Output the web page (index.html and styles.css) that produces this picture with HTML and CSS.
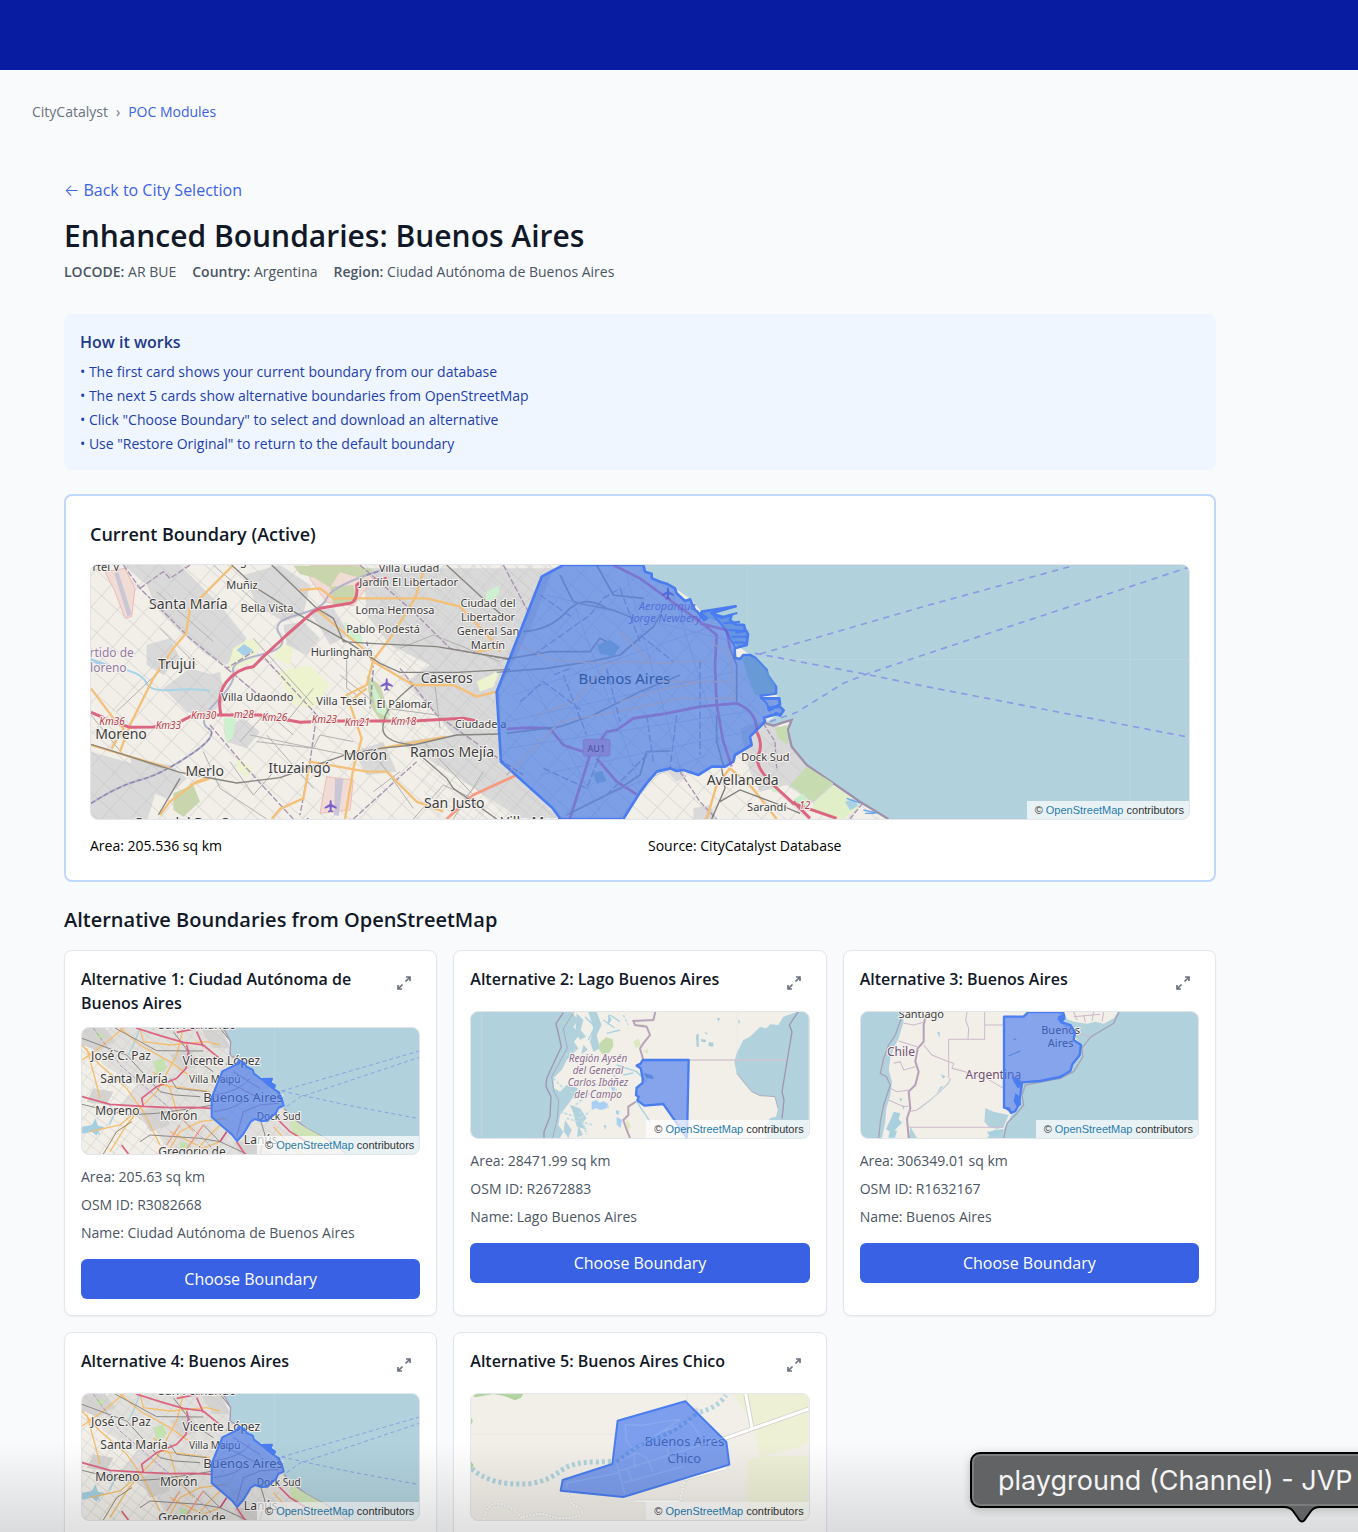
FILE: index.html
```html
<!DOCTYPE html>
<html lang="en">
<head>
<meta charset="utf-8">
<meta name="viewport" content="width=device-width, initial-scale=1">
<title>Enhanced Boundaries: Buenos Aires</title>
<link rel="stylesheet" href="styles.css">
</head>
<body>
<svg class="defs" width="0" height="0" aria-hidden="true">
  <defs>
    <pattern id="streets" width="64" height="46" patternUnits="userSpaceOnUse" patternTransform="rotate(42)">
      <path d="M0 1H64M1 0V46" stroke="#c3c1c0" stroke-width="2" fill="none"/>
    </pattern>
    <pattern id="streets-fine" width="34" height="26" patternUnits="userSpaceOnUse" patternTransform="rotate(38)">
      <path d="M0 1H34M1 0V26" stroke="#cbc9c8" stroke-width="2" fill="none"/>
    </pattern>
    <g id="plane"><path d="M0-18q3 0 3 6v6l15 9v5l-15-5v9l5 4v3l-8-2-8 2v-3l5-4v-9l-15 5v-5l15-9v-6q0-6 3-6z" fill="#7a5fc7"/></g>
    <g id="expand">
      <path d="M11.500 8.500 16 4M12 4H16V8M8.500 11.500 4 16M4 12V16H8" fill="none" stroke="currentColor" stroke-width="1.700"/>
    </g>

    <g id="metro-base">
      <path d="M66 249H1078V627H66z" fill="#f2efe9"/>
      <path d="M150 249H490L520 340 600 400 670 480 740 540 860 627H330L290 560 180 480 230 420 130 360 90 290z" fill="#e2e0dd"/>
      <path d="M66 249h70l30 40-50 30-50-20zM330 330l60-20 30 50-60 20zM100 430l60 10-20 40-60-10zM240 500l70-20 20 60-60 20zM420 249l60 0 30 60-50 0zM520 590l60 0 60 37h-100z" fill="#d4d3d1"/>
      <path d="M66 249H600L860 627H66z" fill="url(#streets-fine)" opacity=".8"/>
      <path d="M280 350l30-10 10 30-30 20zM110 262l20 5 0 16-18-4zM300 395l20 5-8 20-18-4zM360 590l30 6-6 20-26-6zM690 560l40-20 50 30-20 30z" fill="#c4e2b0"/>
      <path d="M66 545l30-5 10-20 8 22 20 4-18 12-6 14-14-12-30 6z" fill="#a5cfe0"/>
      <path d="M150 480l12 30-14 30M205 330l15-30 20-50M100 540l20 30" fill="none" stroke="#a5cfe0" stroke-width="4"/>
      <g fill="none" stroke="#f3bd6c" stroke-width="4">
        <path d="M66 300 120 360 200 430 250 500 300 600M66 345 130 300 190 249M80 310 105 400 120 460M150 620 200 540 240 490 290 440 350 330 370 249M180 249 240 300 330 350 400 400M240 249 250 290 330 300 440 290 480 300M90 560 180 540 240 490M300 420 380 430 450 440M320 627 360 560 420 530 500 520M400 627 440 580 480 540M640 545 690 600 730 627M280 380 330 430 350 500 400 560M330 560 430 610 480 590"/>
      </g>
      <g fill="none" stroke="#8b8885" stroke-width="3">
        <path d="M66 280 200 330 300 440 345 450 420 455M66 478 200 510 290 505 400 490 460 480M165 249 290 317 430 318M340 260 400 340 460 380M430 540 480 590 560 627M240 590 270 570 420 580 480 590M600 520 615 570 600 627M480 249 520 300 500 360M330 400 350 430 440 440"/>
        <path d="M130 627 170 560 215 530" stroke="#9c8561"/>
      </g>
      <g fill="none" stroke="#dd6480" stroke-width="5">
        <path d="M66 455 150 478 250 484 330 488 400 487 455 490M250 484 245 460 290 425 350 400 378 370 385 320 380 300M228 249 300 272 370 292 430 300 490 350M410 260 430 305M350 262 420 249M530 590 555 627M655 525 690 560 740 590M185 600 205 627"/>
        <path d="M500 560 480 590" stroke="#c9557a"/>
        <path d="M360 540 320 600M430 540 370 627" stroke="#f0997f" stroke-width="4"/>
      </g>
      <path d="M100 249 180 360 330 490 440 590 470 627" fill="none" stroke="#b19ab7" stroke-width="3" stroke-dasharray="12 5"/>
      <path d="M490 249 512 290 510 330 540 350 600 395 640 410 648 440 668 470 672 490 700 520 740 550 800 582 860 627H1078V249z" fill="#b1d2dd"/>
      <path d="M490 249 512 290 510 330 540 350M672 490 700 520 740 550 800 582 860 627" fill="none" stroke="#a99ab3" stroke-width="4"/>
      <path d="M690 520l50 30 55 30-25 30-80-60z" fill="#cfe3b6"/>
      <path d="M643 249V430" stroke="#bfd8e0" stroke-width="2"/>
      <g fill="none" stroke="#8aa0e4" stroke-width="3" stroke-dasharray="12 9">
        <path d="M665 438 1078 318M665 438 860 480 1078 521M680 485 720 456 800 430 1078 337"/>
      </g>
    </g>
    <g id="metro-boundary">
      <path d="M455 458 487 379 530 358 537 346 553 354 560 366 578 374 582 386 604 402 636 401 632 412 645 422 641 432 657 442 661 455 665 458 671 482 655 489 647 506 638 512 622 527 603 528 585 522 572 530 550 567 531 588 518 571 455 516z" fill="#3e72ee" fill-opacity=".62" stroke="#4a7df0" stroke-width="6" stroke-linejoin="round"/>
      <path d="M600 402 636 401 630 412 645 424 640 434 628 426z" fill="#4a7df0"/>
      <path d="M462 450Q540 440 570 400M462 500Q540 490 560 455M530 575 550 500 600 480 655 475M480 400 600 460M520 380 600 430" fill="none" stroke="#5a69c8" stroke-width="3" opacity=".55"/>
    </g>
  </defs>
</svg>

<div class="app">
  <header class="topbar"></header>
  <nav class="breadcrumb" aria-label="Breadcrumb">
    <span>CityCatalyst</span><span>›</span><a href="#modules">POC Modules</a>
  </nav>

  <main class="content">
    <a class="back" href="#cities"><span class="arrow">←</span> Back to City Selection</a>
    <h1>Enhanced Boundaries: Buenos Aires</h1>
    <div class="meta">
      <span><b>LOCODE:</b> AR BUE</span>
      <span><b>Country:</b> Argentina</span>
      <span><b>Region:</b> Ciudad Autónoma de Buenos Aires</span>
    </div>

    <section class="info">
      <h2>How it works</h2>
      <ul>
        <li>• The first card shows your current boundary from our database</li>
        <li>• The next 5 cards show alternative boundaries from OpenStreetMap</li>
        <li>• Click "Choose Boundary" to select and download an alternative</li>
        <li>• Use "Restore Original" to return to the default boundary</li>
      </ul>
    </section>

    <section class="current">
      <h2>Current Boundary (Active)</h2>
      <div class="map map-large">
        <svg viewBox="33 30 3294 762" preserveAspectRatio="xMidYMid slice">
          <path d="M33 30H3327V792H33z" fill="#f2efe9"/>
          <!-- built-up areas -->
          <g fill="#d9d9d9">
            <path d="M130 30H300L420 150 500 250 440 330 380 300 300 230 230 160 200 90zM200 270l70-20 30 60-50 50-50-30zM33 590l140 40 60 60-30 102H33zM150 610l120 20 50 40-60 60-80-30zM250 400l80-60 70 20 40 70-60 60-60-20zM360 370l60-20 10 60-40 30zM430 520l60-30 50 40-40 50-60-20zM490 60l110-30 90 60-20 90-60 20-80-50zM610 210l60-10 50 50-40 50-60-30zM690 170l70-10 50 80-60 30zM820 590l90-30 40 90-90 10z"/>
            <path d="M850 40H1420L1360 200 1260 400 1262 620 1440 790H1320L1120 660 960 560 1120 540 1060 470 980 380 1050 330 930 270 860 180z"/>
            <path d="M1980 520l60-20 80 20 30 70 60 60 60 30-60 70-90-60-80 20-30-60zM1760 650l40-15 20 30-30 15zM1840 760l50-10 20 42h-70z"/>
          </g>
          <path d="M33 30H1700L2400 792H33z" fill="url(#streets)" opacity=".75"/>
          <path d="M880 30H1420L1262 400V620L1440 792H1050z" fill="url(#streets-fine)" opacity=".7"/>
          <!-- parks, airfields and farmland -->
          <path d="M75 50l60-10 30 60-10 85-20 5-30-80zM690 32h150l40 40-60 80-80-10-50-70zM740 665l80 10-10 90-90 10z" fill="#f0dbd5" stroke="#e9a9a2" stroke-width="2"/>
          <path d="M103 55l12-3 40 125-12 8zM765 670l25 3-14 110-14-3z" fill="#c9c6d6"/>
          <path d="M640 32h180l60 10-30 30-70-20-30 45-50-30-40-10zM750 95l70-5 10 50-70 10zM280 715l60-25 20 50-50 45-30-20zM860 360l40 30 30 90-20 30-40-60z" fill="#c9d5ac"/>
          <path d="M460 280l50-30 30 20-20 50-80 30zM600 260l40 20-10 50-50-20zM590 350l100-20 60 60-50 70-60-10zM470 610l50 30-20 30-30-30zM1190 380l70-35-20 50-40 15z" fill="#edf2cf"/>
          <path d="M790 200l50 20 10 50-50-20zM430 490l40-5-10 60-20 20zM870 370l30 60 30 60-40-20zM1220 110l40-20-5 30-40 30z" fill="#cdf0cf"/>
          <path d="M470 285l22-18 12 8 14 10-16 18-14-2zM33 310l60 20-20 6-40-16z" fill="#a4cfe6"/>
          <path d="M140 345Q190 360 200 385T280 405T390 408" fill="none" stroke="#a8d4e6" stroke-width="6"/>
          <path d="M33 745Q120 690 180 675T330 600 385 520 410 440 460 350 540 300 600 240 650 180 740 130 860 60 930 40" fill="none" stroke="#b3b4cb" stroke-width="6"/>
          <path d="M33 745Q120 690 180 675T330 600 385 520M860 60 930 40M860 260 880 340 870 460" fill="none" stroke="#8a84ab" stroke-width="4" stroke-dasharray="14 8"/>
          <!-- district borders -->
          <g fill="none" stroke="#a892b2" stroke-width="4" stroke-dasharray="18 6">
            <path d="M130 30 180 100 330 250 440 340 520 290M440 340 560 440M555 310 710 480 690 620 660 780M180 100 250 50 270 70 330 30M555 310 590 350M390 510 500 640 640 792M840 30 1000 170 1110 280 1290 315M960 340 1070 480 1240 600 1330 660M1270 30 1350 180M820 792 1010 620"/>
          </g>
          <!-- secondary roads -->
          <g fill="none" stroke="#b3b1af" stroke-width="3">
            <path d="M33 480 130 600 250 640M230 110 400 260M370 590 420 700 560 792M450 620 520 720 590 640M510 540 800 600M530 560 700 580 720 540 820 560M800 300V400L830 420M400 30 560 170M240 220 350 330M110 470 290 300M520 250 700 450M560 540 700 700M480 560 560 470 640 540M780 360 880 440M700 400 620 500"/>
            <path d="M1030 560 1180 720M900 620 1000 760M880 710 960 650M1000 792 1090 690 1200 740M1120 792 1210 650M960 280 1060 240 1260 320M1060 350 1080 520M920 460 1070 480"/>
          </g>
          <!-- main avenues -->
          <g fill="none" stroke="#f4c078" stroke-width="7">
            <path d="M460 30 330 160 318 235 280 280 220 370 150 510 120 590M33 400 100 490 130 520 95 580M660 105 720 100 760 130H870L1040 130 1140 155 1240 260 1260 290M1030 50 1005 130 930 250 880 315 860 390 800 420 845 550 820 640 795 792M705 160 860 290 880 320 1000 390 1120 390 1190 425 1250 410M240 780 270 740 350 680 380 670M690 620 860 650H920L1010 740 1090 770M575 792 600 762 670 730 690 620M33 570 270 640M900 580 1100 545M330 690l60-20M1240 280l-50 10M860 400 810 440"/>
          </g>
          <path d="M1100 792 1180 720 1310 660" fill="none" stroke="#f79a7f" stroke-width="8"/>
          <!-- railways -->
          <g fill="none" stroke="#86847f" stroke-width="4">
            <path d="M33 568 300 652 470 684 600 668 800 598 900 580 1000 570 1130 540 1260 537M455 30 530 100 650 175 810 265 900 325 960 352 1130 352 1290 343M575 30 710 160 760 190 790 260 870 265 1070 275 1290 312M1000 570Q890 560 912 500 912 460 1000 390M1020 600 1100 670 1120 700 1250 792M1100 30 1230 150 1290 200M235 780 300 670"/>
          </g>
          <!-- motorway -->
          <g fill="none" stroke="#dc6680" stroke-width="9" stroke-linejoin="round">
            <path d="M33 472 100 500 150 517 220 516 290 505 340 480H540L660 502 760 498 1000 498 1150 490 1190 498M424 484Q408 420 440 380T520 335L550 305 620 240 700 170 720 160 810 145Q835 138 830 90L840 82 920 70"/>
          </g>

          <!-- waterfront and river -->
          <g transform="translate(1680 0)">
            <path d="M10 30 15 50 35 55 35 70 105 100 155 135 200 190 240 200 290 270 330 300 375 345 408 415 430 470 380 500 400 512 430 502 455 495 443 525 455 575 500 630 580 685 660 740 745 792H1648V30z" fill="#b1d2dd"/>
            <path d="M370 502 400 512 430 502 455 495 443 525 455 575 500 630 580 685 660 740 745 792" fill="none" stroke="#9d91ab" stroke-width="7"/>
            <path d="M450 690l50-55 80 50-60 55zM405 520l35-10 5 60-30-20z" fill="#c6dbaf"/>
            <path d="M520 745l60-55 80 60-50 42-90-20z" fill="#e0efc7"/>
            <path d="M615 740l25-8 15 20-25 14z" fill="#a9d2e4"/>
            <path d="M670 765l45 10M620 730l40 14M675 775h30" fill="none" stroke="#6ba7e8" stroke-width="4"/>
            <path d="M460 735l30-20 15 30-20 25zM400 680l20 4-10 30-14-6z" fill="#c6efca"/>
            <path d="M370 505 405 560 410 640M120 650 180 740 230 792M630 792l40-50" fill="none" stroke="#a892b2" stroke-width="4" stroke-dasharray="16 6"/>
            <path d="M270 640 230 690 200 792M270 640 330 690 410 792" fill="none" stroke="#f4bd72" stroke-width="7"/>
            <path d="M245 640 255 700 215 792M240 740 300 705 420 750 480 775" fill="none" stroke="#7f7d7a" stroke-width="4"/>
            <path d="M350 530Q370 570 355 600T400 690L460 745 590 790M460 740 510 790" fill="none" stroke="#dc6680" stroke-width="9"/>
            <path d="M323 30V240M330 313H1648M1470 30V792" stroke="#bfd8e0" stroke-width="2"/>
            <g fill="none" stroke="#8d98e6" stroke-width="5" stroke-dasharray="19 16">
              <path d="M360 297 860 152 1300 32M345 295 680 358 860 395 1648 547M390 500 470 472 610 385 680 357 880 290 1648 36"/>
            </g>
          </g>

          <g class="label town">
            <text x="325" y="163">Santa María</text><text x="290" y="342">Trujui</text><text x="123" y="553">Moreno</text>
            <text x="374" y="664">Merlo</text><text x="658" y="655">Ituzaingó</text><text x="856" y="616">Morón</text>
            <text x="1100" y="384">Caseros</text><text x="1116" y="605">Ramos Mejía</text><text x="1123" y="759">San Justo</text>
            <text x="1988" y="689">Avellaneda</text><text x="328" y="818">Paso del Rey Sur</text><text x="1385" y="816">Villa Madero</text>
          </g>
          <g class="label suburb">
            <text x="486" y="101">Muñiz</text><text x="561" y="171">Bella Vista</text><text x="78" y="48">rtel V</text>
            <text x="785" y="304">Hurlingham</text><text x="532" y="439">Villa Udaondo</text><text x="784" y="450">Villa Tesei</text>
            <text x="987" y="50">Villa Ciudad</text><text x="986" y="93">Jardín El Libertador</text><text x="945" y="177">Loma Hermosa</text>
            <text x="909" y="233">Pablo Podestá</text><text x="972" y="459">El Palomar</text><text x="1202" y="519">Ciudadela</text>
            <text x="1224" y="156">Ciudad del</text><text x="1224" y="198">Libertador</text><text x="1224" y="241">General San</text><text x="1224" y="283">Martín</text>
            <text x="2056" y="617">Dock Sud</text><text x="2060" y="769">Sarandí</text><text x="480" y="30">ng</text>
          </g>
          <g class="label partido"><text x="95" y="305">rtido de</text><text x="85" y="350">loreno</text></g>
          <g class="label km">
            <text x="96" y="509">Km36</text><text x="265" y="521">Km33</text><text x="371" y="491">Km30</text><text x="492" y="489">m28</text>
            <text x="584" y="498">Km26</text><text x="733" y="505">Km23</text><text x="832" y="512">Km21</text><text x="971" y="510">Km18</text><text x="2174" y="762">12</text>
          </g>
          <g class="label airport"><text x="752" y="812">Aeropuerto</text><text x="1762" y="165">Aeroparque</text><text x="1757" y="200">Jorge Newbery</text></g>
          <use href="#plane" x="752" y="753"/><use href="#plane" x="920" y="388"/><use href="#plane" x="1764" y="115"/>
          <g class="label city"><text x="1633" y="388">Buenos Aires</text></g>

          <!-- active boundary -->
          <g transform="translate(1680 0)">
            <path d="M-230 30-295 65-430 410-417 620-262 760-238 792H-50L0 712 20 685 50 650 90 640 110 648 130 645 175 660 215 635 255 635 280 620 285 600 335 570 330 545 355 520 375 500 372 488 392 482 400 480 410 474 420 482 431 466 420 455 385 458 388 466 420 448 418 430 365 430 362 422 408 415 408 395 383 360 380 345 345 308 330 300 310 300 300 312 285 308 284 280 320 270 324 238 318 226 290 232 316 226 312 210 285 208 270 195 275 180 245 188 215 175 287 154 185 170 183 175 200 190 192 195 172 170 165 165 150 133 135 138 110 115 105 100 80 86 60 80 35 70 35 56 15 50 10 30z" fill="#3c72e4" fill-opacity=".64" stroke="#4a7df0" stroke-width="8" stroke-linejoin="round"/>
            <path d="M215 175 250 185 292 174M250 205 300 200M265 225 318 228M275 245 322 245M280 262 322 264M220 180 250 215 285 275" fill="none" stroke="#4a7df0" stroke-width="6"/>
            <path d="M305 305 345 308 380 345 405 390V415L345 420 325 370z" fill="#6498d4" opacity=".8"/>
            <path d="M365 430H415L420 448 388 462 380 445zM390 482 425 478" fill="none" stroke="#4a7df0" stroke-width="6"/>
            <g opacity=".5">
              <path d="M-400 522-330 518-270 520-230 570-170 590M-210 790-150 600-100 530-70 525-20 490 80 475 180 455 230 450 290 445Q350 470 350 525M-130 610-70 680-10 718M-80 30 0 70 110 150 180 200 230 240 225 330 230 450 250 560 275 635M180 205 260 225 270 280" fill="none" stroke="#7a4fb8" stroke-width="8"/>
              <path d="M-430 352-280 340-140 318-60 300 40 215 60 180M-400 535-240 515-140 480 0 410 120 360M-240 60-200 140-160 150-80 165-20 190M-220 780-60 700 0 660 20 590 90 588M-130 30-80 120 10 130M-400 312-270 290-150 290-120 250-100 260M230 480V560L250 630M270 280 290 330V440M-350 230Q-270 225-220 170T-100 160" fill="none" stroke="#4d68ac" stroke-width="5"/>
              <path d="M-370 270-260 315-110 325-50 320 60 325 120 320 200 320M-320 485-200 440-100 330M-400 660-240 500-20 460 120 430 280 430M60 380H280M-60 230 30 320M210 260 270 300 280 440M-60 440 80 400 200 380" fill="none" stroke="#9c96b4" stroke-width="5"/>
              <path d="M-320 300-150 180-110 130-60 100M-300 120-200 190M-230 360-160 540M-360 440-290 380-170 470M-290 640-160 700-100 550M180 320V600M20 480 40 620M-60 100 0 260M110 480 90 640M-100 720 20 600M-260 360-210 340M-100 340-60 500M0 240 100 320" fill="none" stroke="#4f6cc6" stroke-width="4" stroke-dasharray="22 8"/>
              <path d="M-380 420 200 220M-400 500 280 350M-400 580 320 470M-300 660 320 530M-350 330-120 770M-200 140 0 690M-40 60 120 640M100 120 250 600M-280 120 280 260M-150 740 200 600" fill="none" stroke="#6384d8" stroke-width="2"/>
              <path d="M-130 270l40-15 30 20-20 30-40-10zM-140 655l25-8 15 30-30 10z" fill="#4a86d0"/>
            </g>
            <rect x="-170" y="553" width="80" height="50" rx="6" fill="#7f86d8" stroke="#7774cc" stroke-width="2"/>
          </g>
          <g class="label route"><text x="1549" y="591">AU1</text></g>
        </svg>
        <div class="credit">© <a href="#osm">OpenStreetMap</a> contributors</div>
      </div>
      <div class="facts"><span>Area: 205.536 sq km</span><span>Source: CityCatalyst Database</span></div>
    </section>

    <h2 class="section-title">Alternative Boundaries from OpenStreetMap</h2>
    <div class="grid">
      <article class="card">
        <div class="card-head">
          <h3>Alternative 1: Ciudad Autónoma de Buenos Aires</h3>
          <button class="icon-button" aria-label="Expand"><svg viewBox="0 0 20 20"><use href="#expand"/></svg></button>
        </div>
        <div class="map">
          <svg viewBox="66 249 1012 378" preserveAspectRatio="xMidYMid slice">
            <use href="#metro-base"/>
            <g class="label place">
              <text x="412" y="253">San Fernando</text><text x="183" y="345">José C. Paz</text><text x="484" y="359">Vicente López</text>
              <text x="222" y="415">Santa María</text><text x="172" y="509">Moreno</text><text x="356" y="526">Morón</text>
              <text x="656" y="526" class="minor">Dock Sud</text><text x="464" y="415" class="minor">Villa Maipú</text><text x="549" y="470" class="major">Buenos Aires</text>
              <text x="602" y="597">Lanús</text><text x="396" y="634">Gregorio de</text>
            </g>
            <use href="#metro-boundary"/>
          </svg>
          <div class="credit">© <a href="#osm">OpenStreetMap</a> contributors</div>
        </div>
        <div class="details"><p>Area: 205.63 sq km</p><p>OSM ID: R3082668</p><p>Name: Ciudad Autónoma de Buenos Aires</p></div>
        <button class="choose">Choose Boundary</button>
      </article>

      <article class="card">
        <div class="card-head">
          <h3>Alternative 2: Lago Buenos Aires</h3>
          <button class="icon-button" aria-label="Expand"><svg viewBox="0 0 20 20"><use href="#expand"/></svg></button>
        </div>
        <div class="map">
          <svg viewBox="63 201 1012 378" preserveAspectRatio="xMidYMid slice">
            <path d="M63 201H1076V579H63z" fill="#f2efe9"/>
            <path d="M63 201H365L385 225 370 245 388 270 372 290 385 310 350 345 335 375 310 400 312 430 330 440 350 420 385 430 360 470 330 510 325 540 340 560 330 579H63z" fill="#b1d2dd"/>
            <path d="M1040 201 1000 215 985 240 960 238 950 250 930 246 900 275 880 285 860 325 853 350 860 385 880 410 905 440 930 452 975 455 984 490 978 515 960 520 940 560 950 579H1076V201z" fill="#b1d2dd"/>
            <path d="M440 201 455 240 440 270 450 310 430 320 420 290 430 250 415 201zM380 205l20 20-8 30 16 20-18 10-14-26zM475 205l10 20-12 15zM400 300l14 14-20 14zM360 480l30 10 20 30-14 14 14 20-30-10-10-40zM345 525l20 30-10 24-14-20zM385 540l14 30-18 6z" fill="#b1d2dd"/>
            <path d="M330 210l18 14-10 14 20 12-6 20-12-20zM480 210l30 20M460 225l34 24M470 265l40-10M405 215l30 30-20 40M500 360l60 20 30 30M520 390l30-6M560 470l40 60" fill="none" stroke="#a9d2e2" stroke-width="4"/>
            <path d="M345 330l40-20M310 400l30 30M360 440l50 14-40 30M370 460l70-20 50 14M330 500l60 20 30-20M350 520l80 20M390 500l20 70M420 420l60-4 20 20M470 370l30 30M520 210l15 30M440 490l40-4" fill="none" stroke="#bddbe2" stroke-width="5" stroke-dasharray="9 5"/>
            <path d="M425 470l14-5 10 8 12-4 14 8-8 14-16 4-12-6-14 6zM498 495l10 3-2 12-8-4zM500 515l16 10-4 24-12-10zM460 540l10 2-4 12zM480 425l16 5-6 10z" fill="#a9d0f2"/>
            <path d="M448 295l20-18 20 6 2 20-12 20-20 5-10-12zM336 228l10 4-2 10z" fill="#c3dbad"/>
            <path d="M550 290l16-10 6 20-14 10zM575 235l14 6-20 6zM580 320l12-10 4 16zM528 520l14 20-10 30z" fill="#dce8bd"/>
            <path d="M738 270l8-4v40h-6zM752 282l16 2v8l-14-2zM776 291l14 2v12l-14-2zM762 262l10 2v6zM800 218l10 2-4 10zM866 222l5 8-6 6z" fill="#a9cfdc"/>
            <path d="M862 201V345M95 201V579" stroke="#dfe2e1" stroke-width="1"/>
            <path d="M716 345H1010" stroke="#d2c6d2" stroke-width="4"/>
            <g fill="none" stroke="#a095b1" stroke-width="4">
              <path d="M340 203 318 235 334 305 290 400 288 425 303 455 300 515 282 560V579M1044 201 1018 240 1026 260 996 440 1002 465 996 520"/>
              <path d="M372 201 340 250 352 310 305 395 312 440 326 465 322 520 308 579M860 385 905 440 930 452 975 455 984 490" stroke-width="2"/>
            </g>
            <path d="M616 201 610 225 550 228 555 240 590 245 600 270 580 295 570 310 580 345M558 470 535 485 535 510 520 525 530 555 540 579" fill="none" stroke="#b8a4b8" stroke-width="6"/>
            <g class="label region"><text x="444" y="352">Región Aysén</text><text x="444" y="388">del General</text><text x="444" y="424">Carlos Ibáñez</text><text x="444" y="459">del Campo</text></g>
            <path d="M578 345H716L711 579 670 520 640 477 583 482 562 466 566 456 558 450 560 428 578 414 578 400 572 370 560 362 572 356z" fill="#3e72ee" fill-opacity=".6" stroke="#4a7df0" stroke-width="7" stroke-linejoin="round"/>
            <path d="M580 384 606 390 612 402 590 400z" fill="#5888df"/>
          </svg>
          <div class="credit">© <a href="#osm">OpenStreetMap</a> contributors</div>
        </div>
        <div class="details"><p>Area: 28471.99 sq km</p><p>OSM ID: R2672883</p><p>Name: Lago Buenos Aires</p></div>
        <button class="choose">Choose Boundary</button>
      </article>

      <article class="card">
        <div class="card-head">
          <h3>Alternative 3: Buenos Aires</h3>
          <button class="icon-button" aria-label="Expand"><svg viewBox="0 0 20 20"><use href="#expand"/></svg></button>
        </div>
        <div class="map">
          <svg viewBox="62 201 1012 378" preserveAspectRatio="xMidYMid slice">
            <path d="M62 201H1074V579H62z" fill="#b1d2dd"/>
            <path d="M186 201 190 230 175 280 160 310 150 340 145 375 155 410 150 450 138 490 135 530 125 579H205L210 545 230 579H440L460 555 490 552 488 579 492 545 510 515 480 507 455 505 440 488 432 530 445 545 490 552 515 508 535 490 545 450 545 410 620 402 680 385 720 330 722 300 700 270 660 222 655 201z" fill="#f2efe9"/>
            <path d="M670 201H832L820 220 790 236 765 230 740 236 700 230 680 222z" fill="#f2efe9"/>
            <path d="M432 530 435 490 460 500 505 510 490 545 470 552 445 545z" fill="#b1d2dd"/>
            <path d="M160 500l20 5-5 18 10 10-30 30-18-10 14-30zM185 480l8 4-4 12zM150 550l20 8-6 20h-20zM176 459l10 2-4 10zM290 262l8-2v18zM300 425l10-2-20 20zM440 560l50-6-10 18-30 4zM302 388l14 6-8 8z" fill="#a9d0de"/>
            <path d="M836 201 820 235 752 275 724 310 728 335 700 380 660 400 555 420 545 450 550 480 530 505 500 535 490 579M190 201 165 270 145 300 130 340 120 385 138 395 150 420 130 480 120 530 115 579" fill="none" stroke="#a5a2b8" stroke-width="4"/>
            <path d="M258 201 250 240 250 290 232 310 225 350 235 380 225 420 205 440 210 490 200 520 205 579" fill="none" stroke="#b5a0b6" stroke-width="6"/>
            <g fill="none" stroke="#cdb9cd" stroke-width="3">
              <path d="M433 201V283H325V400M380 201 376 225 385 250 383 283M433 240H490M250 300 275 330 325 350 340 355 335 370 375 380 385 392 430 395 490 430M330 400 325 415 270 465 230 495 205 500M205 547H490M190 235 220 240 250 232M175 288 230 305M160 355 180 350 190 375 225 365M150 430 170 440 205 435M145 465 190 485 205 483M660 230 700 265 752 275M700 201 710 225M730 210 735 232M760 201 755 228M790 201 785 230M700 215 780 208"/>
            </g>
            <path d="M240 490 300 440 330 405" fill="none" stroke="#c5d9df" stroke-width="3"/>
            <g class="label country"><text x="182" y="332">Chile</text><text x="459" y="402">Argentina</text></g>
            <g class="label capital"><text x="243" y="220">Santiago</text><text x="661" y="267">Buenos</text><text x="661" y="306">Aires</text></g>
            <path d="M491 215H550L564 201H668L672 215 655 222 665 232 690 240 704 262 700 285 722 300 718 330 696 358 690 378 660 396 600 408 545 412 540 450 535 480 525 498 512 504 505 490 491 488z" fill="#3e72ee" fill-opacity=".6" stroke="#4a7df0" stroke-width="7" stroke-linejoin="round"/>
            <path d="M514 394 540 404 545 424 532 430 520 410zM525 445 540 455 542 480 528 484 520 468zM652 215l18-8 6 14-14 16zM492 490l18 4 2 10z" fill="#4a7df0"/>
            <path d="M505 332 540 318M520 284l8-3M560 206l4-2" stroke="#5283d8" stroke-width="3"/>
          </svg>
          <div class="credit">© <a href="#osm">OpenStreetMap</a> contributors</div>
        </div>
        <div class="details"><p>Area: 306349.01 sq km</p><p>OSM ID: R1632167</p><p>Name: Buenos Aires</p></div>
        <button class="choose">Choose Boundary</button>
      </article>

      <article class="card">
        <div class="card-head">
          <h3>Alternative 4: Buenos Aires</h3>
          <button class="icon-button" aria-label="Expand"><svg viewBox="0 0 20 20"><use href="#expand"/></svg></button>
        </div>
        <div class="map">
          <svg viewBox="66 249 1012 378" preserveAspectRatio="xMidYMid slice">
            <use href="#metro-base"/>
            <g class="label place">
              <text x="412" y="253">San Fernando</text><text x="183" y="345">José C. Paz</text><text x="484" y="359">Vicente López</text>
              <text x="222" y="415">Santa María</text><text x="172" y="509">Moreno</text><text x="356" y="526">Morón</text>
              <text x="656" y="526" class="minor">Dock Sud</text><text x="464" y="415" class="minor">Villa Maipú</text><text x="549" y="470" class="major">Buenos Aires</text>
              <text x="602" y="597">Lanús</text><text x="396" y="634">Gregorio de</text>
            </g>
            <use href="#metro-boundary"/>
          </svg>
          <div class="credit">© <a href="#osm">OpenStreetMap</a> contributors</div>
        </div>
      </article>

      <article class="card">
        <div class="card-head">
          <h3>Alternative 5: Buenos Aires Chico</h3>
          <button class="icon-button" aria-label="Expand"><svg viewBox="0 0 20 20"><use href="#expand"/></svg></button>
        </div>
        <div class="map">
          <svg viewBox="63 208 1012 378" preserveAspectRatio="xMidYMid slice">
            <path d="M63 208H1076V586H63z" fill="#f2efe9"/>
            <path d="M850 208H1076V355L1040 370 930 395 910 300z" fill="#eef0d6"/>
            <path d="M892 405 930 395H1076V586H892z" fill="#eef0d6"/>
            <path d="M66 208H220L212 220 195 227 160 213 130 208 75 218zM63 280l6 8-6 12zM63 410l8 12-8 14z" fill="#b0d3a0"/>
            <path d="M63 328H500M712 208V260" stroke="#e6e3de" stroke-width="2"/>
            <path d="M66 432Q90 455 130 468T240 477Q290 470 330 440T440 412L485 410M750 262Q800 250 828 212" fill="none" stroke="#b0d3de" stroke-width="15" stroke-dasharray="9 9"/>
            <path d="M800 350 1076 253M887 208 906 308" fill="none" stroke="#d0cecb" stroke-width="14"/>
            <path d="M700 465 830 430M555 530H690" fill="none" stroke="#d6d3d0" stroke-width="10"/>
            <path d="M800 350 1076 253M887 208 906 308" fill="none" stroke="#fff" stroke-width="9"/>
            <path d="M700 465 830 430M555 530H690" fill="none" stroke="#fff" stroke-width="7"/>
            <path d="M102 586Q110 530 150 538T215 580Q260 560 300 574T390 572Q410 560 380 545T355 490M705 460 690 530M745 258l-10-8" fill="none" stroke="#dedbd7" stroke-width="9"/>
            <path d="M102 586Q110 530 150 538T215 580Q260 560 300 574T390 572Q410 560 380 545T355 490M705 460 690 530" fill="none" stroke="#fbfaf8" stroke-width="7" stroke-dasharray="8 2"/>
            <g class="label village"><text x="703" y="364">Buenos Aires</text><text x="703" y="415">Chico</text></g>
            <path d="M503 288 706 230 829 352 838 420 520 517 332 498 338 466 487 418z" fill="#3e72ee" fill-opacity=".65" stroke="#4a7df0" stroke-width="6" stroke-linejoin="round"/>
            <g fill="none" stroke="#95b2f2" stroke-width="4" opacity=".55">
              <path d="M525 300 580 302 640 290 690 285 550 375 500 415 525 510M525 300 530 350 550 375 555 430M500 415 560 385 590 400 610 440M505 440 660 390 820 340M520 475 700 425M530 430 545 465M350 490V475L505 445M640 320 720 290 750 335M650 370 665 410"/>
            </g>
            <path d="M500 412Q560 360 620 340T745 262" fill="none" stroke="#5188dd" stroke-width="12" stroke-dasharray="10 8" opacity=".6"/>
          </svg>
          <div class="credit">© <a href="#osm">OpenStreetMap</a> contributors</div>
        </div>
      </article>
    </div>
  </main>
  <div class="shade"></div>
  <div class="tooltip" role="tooltip">playground (Channel) - JVP
    <svg class="tooltip-tip" viewBox="0 0 36 19"><path d="M0 0V1Q6 1 9 5L14 12Q18 19 22 12L27 5Q30 1 36 1V0z" fill="#626364"/><path d="M0 1Q6 1 9 5L14 12Q18 19 22 12L27 5Q30 1 36 1" fill="none" stroke="#000" stroke-width="2"/></svg>
  </div>
</div>
</body>
</html>
```
FILE: styles.css
```css
* { box-sizing: border-box; }
body {
  margin: 0;
  background: #f9fafc;
  color: #111827;
  font-family: "Open Sans", "Noto Sans", sans-serif;
  font-size: 14px;
  line-height: 20px;
}
h1, h2, h3, p, ul { margin: 0; padding: 0; font-weight: 600; }
p { font-weight: 400; }
a { color: #3b63e6; text-decoration: none; }
button { font: inherit; border: 0; cursor: pointer; }
.defs { position: absolute; }

.app { position: relative; height: 100vh; overflow: hidden; }
.topbar { height: 70px; background: #071ca0; }
.breadcrumb { display: flex; gap: 8px; padding: 32px 32px 0; color: #6b7280; }

.content { max-width: 1280px; padding: 56px 64px 32px; }
.back { display: block; font-size: 16px; line-height: 24px; margin-bottom: 16px; }
.arrow { font-family: Inter, sans-serif; font-weight: 300; }
h1 { font-size: 30px; line-height: 36px; margin-bottom: 8px; }
.meta { display: flex; flex-wrap: wrap; gap: 16px; color: #4b5563; }
.meta b { font-weight: 600; }

.info { margin-top: 32px; padding: 16px; border-radius: 8px; background: #eff6ff; color: #1e40af; }
.info h2 { font-size: 16px; line-height: 24px; margin-bottom: 8px; color: #1e3a8a; }
.info ul { display: flex; flex-direction: column; gap: 4px; list-style: none; font-weight: 400; }

.current { margin-top: 24px; padding: 24px; border: 2px solid #bfd8fb; border-radius: 8px; background: #fff; }
.current h2 { font-size: 18px; line-height: 28px; margin-bottom: 16px; }
.facts { display: grid; grid-template-columns: 1fr 1fr; gap: 16px; margin-top: 16px; color: #000; }

.map { position: relative; height: 128px; border: 1px solid #e2e5e9; border-radius: 8px; overflow: hidden; background: #f2efe9; }
.map-large { height: 256px; }
.map > svg { display: block; width: 100%; height: 100%; }
.credit {
  position: absolute; right: 0; bottom: 0;
  padding: 1px 5px 0 8px;
  background: rgba(255, 255, 255, .7);
  color: #333;
  font: 11px/17px "Liberation Sans", Arial, sans-serif;
}
.credit a { color: #2a7cae; }

.label { font-family: "Noto Sans", sans-serif; text-anchor: middle; fill: #3d3d3d; stroke: #f5f3f0; stroke-width: 6px; stroke-linejoin: round; paint-order: stroke; }
.town { font-size: 42px; }
.suburb { font-size: 33px; }
.partido { font-size: 36px; fill: #967ba0; }
.km { font-size: 30px; font-style: italic; fill: #b43b45; }
.airport { font-size: 33px; font-style: italic; fill: #7a66c4; stroke-width: 0; }
.city { font-size: 45px; stroke-width: 0; fill: #28303c; }
.route { font-size: 27px; fill: #4a4f9c; stroke-width: 0; }
.place { font-size: 36px; }
.place .minor { font-size: 30px; }
.place .major { font-size: 39px; }
.capital { font-size: 33px; }
.region { font-size: 30px; font-style: italic; fill: #8b6c8e; }
.country { font-size: 36px; fill: #71506f; }
.village { font-size: 39px; fill: #4b4b4b; }

.section-title { margin: 24px 0 16px; font-size: 20px; line-height: 28px; }
.grid { display: grid; grid-template-columns: repeat(3, minmax(0, 1fr)); grid-auto-rows: 1fr; gap: 16px; }
.card { padding: 16px; border: 1px solid #e3e6ea; border-radius: 8px; background: #fff; box-shadow: 0 1px 2px rgba(0, 0, 0, .05); }
.card-head { display: flex; justify-content: space-between; align-items: flex-start; gap: 8px; margin-bottom: 12px; }
.card h3 { font-size: 16px; line-height: 24px; }
.icon-button { display: grid; place-items: center; flex: none; width: 32px; height: 32px; padding: 0; background: none; color: #6b7280; }
.icon-button svg { width: 20px; height: 20px; }
.details { display: flex; flex-direction: column; gap: 8px; margin: 12px 0 16px; color: #4b5563; }
.choose { display: block; width: 100%; padding: 8px 16px; border-radius: 6px; background: #3862e3; color: #fff; font-size: 16px; line-height: 24px; }

.shade { position: absolute; inset: auto 0 0; height: 90px; background: linear-gradient(rgba(0, 0, 0, 0), rgba(0, 0, 0, .12)); pointer-events: none; }
.tooltip {
  position: absolute; right: -24px; bottom: 24px;
  width: 412px; padding: 9px 26px 7px;
  border: 2px solid #000; border-radius: 10px;
  background: #626364; color: #f4f4f4;
  box-shadow: inset 0 0 0 2px #7b7c7c, 0 2px 8px rgba(0, 0, 0, .2);
  font: 27px/36px Inter, sans-serif;
  white-space: nowrap;
}
.tooltip-tip { position: absolute; right: 60px; top: 52px; width: 36px; height: 19px; }
```
